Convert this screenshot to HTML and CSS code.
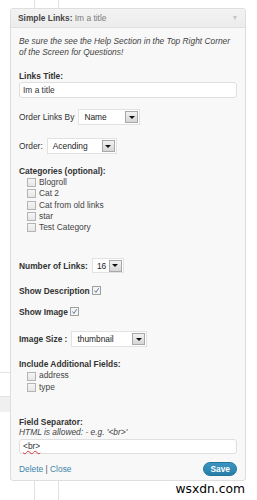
FILE: index.html
```html
<!DOCTYPE html>
<html>
<head>
<meta charset="utf-8">
<link rel="stylesheet" href="styles.css">
</head>
<body>
<div class="page">
  <div class="widget">
    <div class="header">
      <span class="h-name">Simple Links:</span><span class="h-title"> Im a title</span>
      <span class="h-arrow"></span>
    </div>
    <div class="body">
      <p class="note">Be sure the see the Help Section in the Top Right Corner of the Screen for Questions!</p>

      <div class="label lt">Links Title:</div>
      <div class="input">Im a title</div>

      <div class="row r-orderby"><span class="lbl">Order Links By</span><span class="select w-name"><span class="val">Name</span><span class="btn"></span></span></div>
      <div class="row r-order"><span class="lbl">Order:</span><span class="select w-order"><span class="val">Acending</span><span class="btn"></span></span></div>

      <div class="label cats">Categories (optional):</div>
      <ul class="checks">
        <li><span class="cb"></span>Blogroll</li>
        <li><span class="cb"></span>Cat 2</li>
        <li><span class="cb"></span>Cat from old links</li>
        <li><span class="cb"></span>star</li>
        <li><span class="cb"></span>Test Category</li>
      </ul>

      <div class="row r-num"><span class="lbl">Number of Links:</span><span class="select w-num"><span class="val">16</span><span class="btn"></span></span></div>
      <div class="row r-desc"><span class="lbl">Show Description</span><span class="cb checked"><svg viewBox="0 0 9 9" width="9" height="9"><path d="M2 4.5 L3.8 7 L7.3 1.6" fill="none" stroke="#3c5a8a" stroke-width="1"/></svg></span></div>
      <div class="row r-img"><span class="lbl">Show Image</span><span class="cb checked"><svg viewBox="0 0 9 9" width="9" height="9"><path d="M2 4.5 L3.8 7 L7.3 1.6" fill="none" stroke="#3c5a8a" stroke-width="1"/></svg></span></div>
      <div class="row r-size"><span class="lbl">Image Size :</span><span class="select w-size"><span class="val">thumbnail</span><span class="btn"></span></span></div>

      <div class="label addl">Include Additional Fields:</div>
      <ul class="checks checks2">
        <li><span class="cb"></span>address</li>
        <li><span class="cb"></span>type</li>
      </ul>

      <div class="label sep">Field Separator:</div>
      <div class="hint">HTML is allowed: - e.g. '&lt;br&gt;'</div>
      <div class="input input2"><span class="spell">&lt;br&gt;</span></div>

      <div class="actions">
        <span class="links"><a>Delete</a> | <a>Close</a></span>
        <span class="save">Save</span>
      </div>
    </div>
  </div>
  <div class="mark">wsxdn.com</div>
</div>
</body>
</html>
```

FILE: styles.css
```css
html, body { margin: 0; padding: 0; }
body {
  width: 257px;
  height: 500px;
  overflow: hidden;
  font-family: "Liberation Sans", Arial, sans-serif;
  font-size: 8.4px;
  color: #333;
  background:
    linear-gradient(#e2e2e2, #e2e2e2) 0 372px / 10px 1px no-repeat,
    linear-gradient(#e2e2e2, #e2e2e2) 0 396px / 10px 1px no-repeat,
    linear-gradient(#f0f0f0, #f0f0f0) 0 397px / 10px 15px no-repeat,
    linear-gradient(to right, transparent 34px, #e0e0e0 34px, #e0e0e0 35px, transparent 35px, transparent 58px, #e0e0e0 58px, #e0e0e0 59px, transparent 59px) 0 0 / 100% 100% no-repeat,
    #fff;
}
.page { padding: 8px 11px 0 10px; }
.widget {
  border: 1px solid #dedede;
  border-radius: 3px;
  background: #f8f8f8;
  height: 473px;
  box-sizing: border-box;
}
.header {
  height: 18px;
  line-height: 18px;
  padding-left: 7px;
  border-bottom: 1px solid #e0e0e0;
  background: linear-gradient(#f3f3f3, #ececec);
  border-radius: 3px 3px 0 0;
  display: flex;
  align-items: center;
}
.h-name { font-weight: bold; color: #464646; }
.h-title { color: #7a7a7a; white-space: pre; }
.h-arrow {
  margin-left: auto;
  margin-right: 8px;
  width: 0; height: 0;
  border-left: 2.5px solid transparent;
  border-right: 2.5px solid transparent;
  border-top: 4px solid #c4c4c4;
}
.body { padding: 0 8px; }
.note {
  margin: 8px 0 0;
  font-style: italic;
  line-height: 11px;
  color: #444;
}
.label { font-weight: bold; line-height: 11px; color: #333; }
.lt { margin-top: 13px; }
.input {
  height: 16px;
  box-sizing: border-box;
  border: 1px solid #dfdfdf;
  border-radius: 3px;
  background: #fff;
  line-height: 14px;
  padding-left: 3px;
  color: #333;
}
.row { display: flex; align-items: center; height: 16px; }
.lbl { margin-right: 4px; }
.r-orderby { margin-top: 11px; }
.r-order { margin-top: 13px; }
.select {
  display: flex;
  align-items: center;
  height: 16px;
  box-sizing: border-box;
  border: 1px solid #e2e2e2;
  background: #fff;
  padding: 0 1px 0 5px;
}
.select .val { flex: 1; color: #222; }
.btn {
  width: 13px;
  height: 12px;
  box-sizing: border-box;
  border: 1px solid #a8a8a8;
  background: linear-gradient(#f2f2f2, #d6d6d6);
  display: flex;
  align-items: center;
  justify-content: center;
}
.btn::after {
  content: "";
  width: 0; height: 0;
  border-left: 3px solid transparent;
  border-right: 3px solid transparent;
  border-top: 3px solid #111;
}
.w-name { width: 62px; }
.w-order { width: 70px; }
.w-num { width: 32px; padding-left: 4px; height: 15px; }
.w-size { width: 76px; }
.cats { margin-top: 12px; }
.checks { list-style: none; margin: 0; padding: 0 0 0 8px; }
.checks li { display: flex; align-items: center; line-height: 11.3px; height: 11.3px; color: #444; }
.cb {
  display: inline-flex;
  width: 9px;
  height: 9px;
  box-sizing: border-box;
  border: 1px solid #b4b4b4;
  background: linear-gradient(#f6f6f6, #e6e6e6);
  margin-right: 3px;
  align-items: center;
  justify-content: center;
}
.cb svg { display: block; }
.cb.checked { border-color: #a0a0a0; background: #f4f4f4; margin-left: 1px; }
.r-num { margin-top: 25px; height: 15px; }
.r-desc { margin-top: 12px; height: 11px; }
.r-desc .lbl, .r-img .lbl { margin-right: 1px; }
.r-img { margin-top: 10px; height: 11px; }
.r-desc .lbl, .r-img .lbl, .r-num .lbl, .r-size .lbl { font-weight: bold; }
.r-orderby .lbl, .r-order .lbl { font-weight: normal; }
.r-size { margin-top: 14px; }
.addl { margin-top: 12px; }
.sep { margin-top: 24px; line-height: 10px; }
.hint { font-style: italic; color: #444; line-height: 11px; }
.input2 { margin-top: 1px; height: 15px; line-height: 13px; }
.spell { text-decoration: underline wavy #d33; text-decoration-thickness: 1px; text-underline-offset: 1px; }
.actions {
  margin-top: 8px;
  display: flex;
  align-items: center;
  justify-content: space-between;
}
.links { color: #555; }
.links a { color: #3f86a8; }
.save {
  display: inline-block;
  height: 14px;
  line-height: 13px;
  padding: 0 6px;
  box-sizing: border-box;
  border: 1px solid #21759b;
  border-radius: 8px;
  background: linear-gradient(#3a95c2, #2a7ea8);
  color: #fff;
  font-weight: bold;
}
.mark {
  text-align: right;
  font-family: "DejaVu Sans", sans-serif;
  font-size: 12.3px;
  line-height: 16px;
  color: #000;
  padding-right: 1px;
}
```
